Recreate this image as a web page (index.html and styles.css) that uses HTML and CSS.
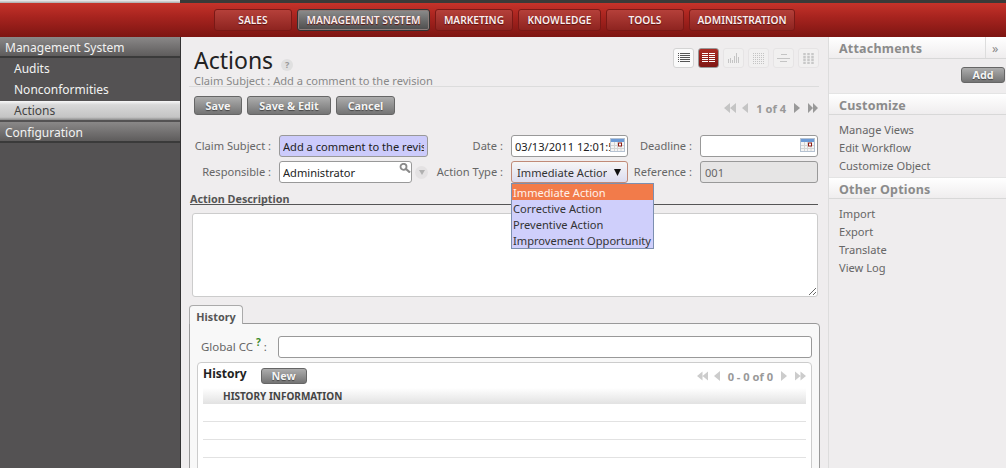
FILE: index.html
```html
<!DOCTYPE html>
<html lang="en">
<head>
    <meta charset="UTF-8">
    <title>Actions</title>
    <link rel="stylesheet" href="styles.css">
</head>
<body>
    <div class="topstrip"><div class="topstrip-left"></div></div>
    <nav class="menubar">
        <a class="menu-btn w-sales">SALES</a>
        <a class="menu-btn active">MANAGEMENT SYSTEM</a>
        <a class="menu-btn w-sales">MARKETING</a>
        <a class="menu-btn w-know">KNOWLEDGE</a>
        <a class="menu-btn w-sales">TOOLS</a>
        <a class="menu-btn w-admin">ADMINISTRATION</a>
    </nav>
    <div class="layout">
        <aside class="sidebar">
            <div class="side-head">Management System</div>
            <a class="side-item">Audits</a>
            <a class="side-item">Nonconformities</a>
            <a class="side-item selected">Actions</a>
            <div class="side-head second">Configuration</div>
        </aside>

        <main class="content">
            <div class="title-row">
                <div>
                    <h1>Actions <span class="help">?</span></h1>
                    <div class="subtitle">Claim Subject : Add a comment to the revision</div>
                </div>
                <div class="views">
                    <span class="view-btn on"><svg width="12" height="10" viewBox="0 0 12 10"><path d="M0 .5h1M0 2.500h1M0 4.500h1M0 6.500h1M0 8.500h1" stroke="#555"/><path d="M2 .5h10M2 2.500h10M2 4.500h10M2 6.500h10M2 8.500h10" stroke="#555" fill="none"/></svg></span>
                    <span class="view-btn current"><svg width="13" height="10" viewBox="0 0 13 10"><path d="M0 .5h6M7 .5h6M0 2.500h6M7 2.500h6M0 4.500h6M7 4.500h6M0 6.500h6M7 6.500h6M0 8.500h6M7 8.500h6" stroke="#fff" fill="none"/></svg></span>
                    <span class="view-btn"><svg width="12" height="10" viewBox="0 0 12 10"><path d="M.5 10V6M2.500 10V5M4.500 10V7M6.500 10V3M8.500 10V0M10.500 10V4" stroke="#c4c4c4" fill="none"/></svg></span>
                    <span class="view-btn"><svg width="12" height="11" viewBox="0 0 12 11"><path d="M0 .5h12M0 2.500h12M0 4.500h12M0 6.500h12M0 8.500h12M0 10.500h12" stroke="#c4c4c4" stroke-dasharray="1 1" fill="none"/></svg></span>
                    <span class="view-btn"><svg width="13" height="10" viewBox="0 0 13 10"><path d="M4 1.500h6M0 5.500h13M3 8.500h7" stroke="#c4c4c4" fill="none"/></svg></span>
                    <span class="view-btn"><svg width="11" height="11" viewBox="0 0 11 11"><path d="M1.500 0v11M5.500 0v11M9.500 0v11" stroke="#c8c8c8" stroke-width="2.500" stroke-dasharray="2.300 .6" fill="none"/></svg></span>
                </div>
            </div>

            <div class="action-row">
                <div class="actions">
                    <button class="btn b-save">Save</button>
                    <button class="btn b-edit">Save &amp; Edit</button>
                    <button class="btn b-cancel">Cancel</button>
                </div>
                <div class="pager main-pager">
                    <svg width="12" height="10" viewBox="0 0 12 10"><path d="M6 0v10L0 5zM12 0v10L6 5z" fill="#c4c4c4"/></svg>
                    <svg class="near" width="6" height="10" viewBox="0 0 6 10"><path d="M6 0v10L0 5z" fill="#c4c4c4"/></svg>
                    <span class="pager-text">1 of 4</span>
                    <svg width="6" height="10" viewBox="0 0 6 10"><path d="M0 0v10l6-5z" fill="#999"/></svg>
                    <svg width="10" height="10" viewBox="0 0 12 10" preserveAspectRatio="none"><path d="M0 0v10l6-5zM6 0v10l6-5z" fill="#999"/></svg>
                </div>
            </div>

            <form class="form-grid">
                <label>Claim Subject :</label>
                <input class="field required" type="text" value="Add a comment to the revision">
                <label>Date :</label>
                <div class="with-icon">
                    <input class="field" type="text" value="03/13/2011 12:01:58">
                    <svg class="cal" width="15" height="14" viewBox="0 0 15 14"><rect x=".5" y=".5" width="14" height="13" fill="#f4f4f4" stroke="#b5c2d2"/><rect x="1" y="1" width="13" height="3" fill="#6c9ad6"/><path d="M4.500 4v9M7.500 4v9M11 4v9M1 7.500h13M1 10.500h13" stroke="#d4d4d4"/><rect x="8.500" y="5" width="3" height="3" fill="#fff" stroke="#8c1a16"/></svg>
                </div>
                <label>Deadline :</label>
                <div class="with-icon">
                    <input class="field" type="text">
                    <svg class="cal" width="15" height="14" viewBox="0 0 15 14"><rect x=".5" y=".5" width="14" height="13" fill="#f4f4f4" stroke="#b5c2d2"/><rect x="1" y="1" width="13" height="3" fill="#6c9ad6"/><path d="M4.500 4v9M7.500 4v9M11 4v9M1 7.500h13M1 10.500h13" stroke="#d4d4d4"/><rect x="8.500" y="5" width="3" height="3" fill="#fff" stroke="#8c1a16"/></svg>
                </div>

                <label>Responsible :</label>
                <div class="m2o">
                    <div class="with-icon grow">
                        <input class="field" type="text" value="Administrator">
                        <svg class="search" width="12" height="10" viewBox="0 0 12 10"><circle cx="4.500" cy="3.800" r="3" fill="none" stroke="#8a8a8a" stroke-width="1.800"/><path d="M7 6l4 3.500" stroke="#8a8a8a" stroke-width="2.200"/></svg>
                    </div>
                    <span class="m2o-open"><svg width="6" height="5" viewBox="0 0 6 5"><path d="M0 0h6L3 5z" fill="#b0b0b0"/></svg></span>
                </div>
                <label>Action Type :</label>
                <div class="select-wrap">
                    <div class="select"><span class="select-text">Immediate Action</span><svg width="7" height="7" viewBox="0 0 7 7"><path d="M0 0h7L3.500 7z" fill="#111"/></svg></div>
                    <ul class="options">
                        <li class="hot">Immediate Action</li>
                        <li>Corrective Action</li>
                        <li>Preventive Action</li>
                        <li>Improvement Opportunity</li>
                    </ul>
                </div>
                <label>Reference :</label>
                <input class="field readonly" type="text" value="001">
            </form>

            <div class="separator">Action Description</div>
            <textarea class="description"></textarea>

            <div class="tabs"><span class="tab">History</span></div>
            <section class="tab-panel">
                <div class="cc-row">
                    <label>Global CC <sup>?</sup> :</label>
                    <input class="field" type="text">
                </div>
                <div class="history">
                    <div class="history-top">
                        <div class="history-left">
                            <b>History</b>
                            <button class="btn small">New</button>
                        </div>
                        <div class="pager">
                            <svg width="11" height="10" viewBox="0 0 12 10"><path d="M6 0v10L0 5zM12 0v10L6 5z" fill="#ccc"/></svg>
                            <svg class="near" width="6" height="10" viewBox="0 0 6 10"><path d="M6 0v10L0 5z" fill="#ccc"/></svg>
                            <span class="pager-text">0 - 0 of 0</span>
                            <svg width="6" height="10" viewBox="0 0 6 10"><path d="M0 0v10l6-5z" fill="#ccc"/></svg>
                            <svg width="11" height="10" viewBox="0 0 12 10"><path d="M0 0v10l6-5zM6 0v10l6-5z" fill="#ccc"/></svg>
                        </div>
                    </div>
                    <div class="grid-head">HISTORY INFORMATION</div>
                    <div class="grid-row"></div>
                    <div class="grid-row"></div>
                    <div class="grid-row"></div>
                </div>
            </section>
        </main>

        <aside class="rightbar">
            <div class="right-head first"><span>Attachments</span><span class="collapse">»</span></div>
            <div class="add-row"><button class="btn small add">Add</button></div>
            <div class="right-head">Customize</div>
            <ul class="right-links">
                <li>Manage Views</li>
                <li>Edit Workflow</li>
                <li>Customize Object</li>
            </ul>
            <div class="right-head">Other Options</div>
            <ul class="right-links">
                <li>Import</li>
                <li>Export</li>
                <li>Translate</li>
                <li>View Log</li>
            </ul>
        </aside>
    </div>
</body>
</html>
```

FILE: styles.css
```css
html, body {
    margin: 0;
    padding: 0;
    height: 468px;
    overflow: hidden;
}
body {
    font-family: "Noto Sans", "Open Sans", sans-serif;
    font-size: 11.1px;
    color: #555;
    background: #efedee;
}
.topstrip {
    height: 3px;
    background: #3a3a38;
}
.topstrip-left {
    width: 180px;
    height: 3px;
    background: linear-gradient(#f2f2f2, #aaa);
}
.menubar {
    height: 34px;
    box-sizing: border-box;
    padding: 6px 0 0 214px;
    display: flex;
    gap: 5px;
    background: linear-gradient(#c5332a, #a8241f 40%, #7d1512);
}
.menu-btn {
    height: 22px;
    box-sizing: border-box;
    text-align: center;
    line-height: 20px;
    font-size: 10.2px;
    font-weight: 600;
    color: #fbeeee;
    border: 1px solid #7a1916;
    border-radius: 3px;
    background: linear-gradient(#b5403a, #8e2420);
    text-shadow: 0 1px 1px #5a0f0c;
}
.w-sales {
    width: 78px;
}
.w-know {
    width: 83px;
}
.w-admin {
    width: 106px;
}
.menu-btn.active {
    width: 133px;
    border-color: #333;
    background: linear-gradient(#8c8c8c, #4c4c4c);
    box-shadow: 0 0 0 1px #8d7c7a inset;
}
.layout {
    display: flex;
    height: 431px;
}

/* left menu */
.sidebar {
    width: 180px;
    flex: none;
    background: #545253;
    border-right: 1px solid #333;
    color: #f2f2f2;
    font-size: 12px;
}
.side-head {
    height: 21px;
    box-sizing: border-box;
    line-height: 21px;
    padding-left: 5px;
    background: linear-gradient(#8a8888, #5e5c5c);
    border-bottom: 2px solid #3a3a3a;
}
.side-head.second {
    margin-top: 2px;
    line-height: 22px;
}
.side-item {
    display: block;
    height: 21px;
    line-height: 21px;
    padding-left: 14px;
}
.side-item.selected {
    height: 19px;
    margin-top: 1px;
    line-height: 19px;
    color: #444;
    background: linear-gradient(#f8f8f8, #d8d8d8 20%, #c4c4c4 85%, #8a8a8a);
}

/* middle */
.content {
    width: 647px;
    flex: none;
    box-sizing: border-box;
    padding: 0 8px;
}
.title-row {
    margin-right: 1px;
    height: 50px;
    box-sizing: border-box;
    padding-left: 5px;
    border-bottom: 1px solid #dcdcdc;
    display: flex;
    justify-content: space-between;
    align-items: flex-start;
}
h1 {
    margin: 8px 0 0;
    font-size: 23px;
    line-height: 30px;
    font-weight: 400;
    color: #222;
}
.help {
    display: inline-block;
    width: 12px;
    height: 12px;
    border-radius: 50%;
    background: #e0e0e0;
    color: #999;
    font-size: 9px;
    line-height: 12px;
    text-align: center;
    font-weight: 700;
    vertical-align: 1px;
    margin-left: 2px;
}
.subtitle {
    line-height: 12px;
    color: #888;
}
.views {
    display: flex;
    gap: 4px;
    margin-top: 11px;
}
.view-btn {
    width: 21px;
    height: 20px;
    box-sizing: border-box;
    display: flex;
    align-items: center;
    justify-content: center;
    border: 1px solid #e6e4e5;
    border-radius: 3px;
    background: #f1f0f0;
}
.view-btn.on {
    border-color: #d4d4d4;
    background: #fafafa;
}
.view-btn.current {
    border-color: #999;
    background: linear-gradient(#a92c26, #7f1714);
}
.action-row {
    display: flex;
    justify-content: space-between;
    align-items: flex-start;
    height: 20px;
    margin: 9px 2px 0 5px;
}
.actions {
    display: flex;
    gap: 5px;
}
.btn {
    height: 19px;
    padding: 0;
    font-family: inherit;
    font-size: 10.8px;
    font-weight: 700;
    color: #f4f4f4;
    border: 1px solid #666;
    border-radius: 3px;
    background: linear-gradient(#adadad, #747474);
    text-shadow: 0 1px 1px #444;
}
.b-save {
    width: 48px;
}
.b-edit {
    width: 84px;
}
.b-cancel {
    width: 59px;
}
.btn.small {
    height: 16px;
    width: 46px;
    line-height: 14px;
}
.btn.add {
    width: 44px;
}
.pager {
    display: flex;
    align-items: center;
    gap: 8px;
    font-weight: 700;
    color: #999;
}
.main-pager {
    margin-top: 3px;
}
.pager-text {
    padding-top: 2px;
}
.pager .near {
    margin-left: -2px;
}

/* form */
.form-grid {
    margin-top: 19px;
    margin-left: 3px;
    display: grid;
    grid-template-columns: 87px 149px 83px 117px 72px 118px;
    grid-template-rows: 22px 22px;
    row-gap: 4px;
    align-items: center;
}
.form-grid label {
    box-sizing: border-box;
    padding-right: 8px;
    text-align: right;
    color: #666;
    white-space: nowrap;
    line-height: 22px;
}
.field {
    width: 100%;
    height: 22px;
    box-sizing: border-box;
    padding: 0 3px;
    font-family: inherit;
    font-size: 11.1px;
    color: #222;
    border: 1px solid #999;
    border-radius: 3px;
    background: #fff;
    outline: none;
}
.field.required {
    background: #cccbfb;
}
.field.readonly {
    background: #e6e5e5;
    color: #666;
    padding-left: 4px;
}
.with-icon {
    position: relative;
    min-width: 0;
}
.with-icon .field {
    padding-right: 12px;
    display: block;
}
.cal {
    position: absolute;
    right: 3px;
    top: 3px;
}
.search {
    position: absolute;
    right: 1px;
    top: 2px;
}
.m2o {
    display: flex;
    align-items: center;
    gap: 3px;
}
.grow {
    flex: 1;
}
.m2o-open {
    width: 13px;
    height: 13px;
    border-radius: 50%;
    background: #e4e2e3;
    display: flex;
    align-items: center;
    justify-content: center;
}
.select-wrap {
    position: relative;
}
.select {
    height: 22px;
    box-sizing: border-box;
    padding: 0 6px 0 5px;
    display: flex;
    align-items: center;
    justify-content: space-between;
    border: 1px solid #c08a78;
    border-radius: 3px;
    background: linear-gradient(#f6f6f6, #dcdcf0);
    color: #333;
}
.select-text {
    width: 90px;
    overflow: hidden;
    white-space: nowrap;
}
.options {
    position: absolute;
    z-index: 2;
    top: 22px;
    left: 0;
    width: 143px;
    box-sizing: border-box;
    margin: 0;
    padding: 0;
    list-style: none;
    background: #cfcffb;
    border: 1px solid #7c8fb0;
    color: #333;
    white-space: nowrap;
}
.options li {
    height: 16px;
    line-height: 18px;
    padding-left: 1px;
}
.options li.hot {
    background: #f27b4a;
    color: #fff2ea;
}

.separator {
    margin: 8px 2px 0 1px;
    height: 13px;
    line-height: 15px;
    border-bottom: 1px solid #555;
    font-size: 10.8px;
    font-weight: 700;
    color: #555;
}
.description {
    display: block;
    width: 626px;
    height: 84px;
    box-sizing: border-box;
    margin: 8px 0 0 3px;
    border: 1px solid #ccc;
    border-radius: 3px;
    background: #fff;
    outline: none;
}

/* tab + grid */
.tabs {
    margin-top: 8px;
    height: 19px;
}
.tab {
    display: block;
    width: 54px;
    height: 19px;
    box-sizing: border-box;
    border: 1px solid #aaa;
    border-bottom: none;
    border-radius: 4px 4px 0 0;
    background: #f8f8f8;
    position: relative;
    z-index: 1;
    text-align: center;
    line-height: 21px;
    font-size: 10.8px;
    font-weight: 700;
    color: #555;
}
.tab-panel {
    width: 631px;
    height: 146px;
    box-sizing: border-box;
    margin-top: -1px;
    padding: 12px 7px 0;
    border: 1px solid #999;
    border-radius: 0 4px 0 0;
    background: #f8f8f8;
    overflow: hidden;
}
.cc-row {
    display: flex;
    align-items: center;
    gap: 6px;
    padding-left: 4px;
    color: #666;
}
.cc-row label {
    white-space: nowrap;
    width: 71px;
    font-size: 11.5px;
    line-height: 22px;
}
.cc-row sup {
    color: #3a8a2a;
    font-weight: 700;
    font-size: 10px;
    line-height: 0;
}
.cc-row .field {
    flex: 1;
}
.history {
    height: 120px;
    margin-top: 4px;
    padding: 0 5px;
    border: 1px solid #ccc;
    border-radius: 4px 4px 0 0;
    background: #fff;
}
.history-top {
    display: flex;
    justify-content: space-between;
    align-items: center;
    height: 25px;
}
.history-left {
    display: flex;
    align-items: center;
    gap: 14px;
}
.history-left b {
    color: #222;
    font-size: 12px;
    margin-top: -4px;
}
.grid-head {
    height: 16px;
    line-height: 16px;
    padding-left: 20px;
    font-size: 10px;
    font-weight: 700;
    color: #444;
    background: linear-gradient(#fff, #e2e2e2);
}
.grid-row {
    height: 17px;
    border-bottom: 1px solid #e2e2e2;
}

/* right */
.rightbar {
    flex: 1;
    border-left: 1px solid #ddd;
    color: #666;
}
.right-head {
    height: 22px;
    box-sizing: border-box;
    line-height: 23px;
    padding-left: 10px;
    font-size: 12.5px;
    font-weight: 700;
    letter-spacing: .2px;
    color: #8b8b8b;
    background: linear-gradient(#fff, #efedee);
    border-bottom: 1px solid #d8d8d8;
    border-top: 1px solid #e4e4e4;
}
.right-head.first {
    display: flex;
    justify-content: space-between;
    border-top: none;
}
.collapse {
    width: 14px;
    padding-left: 6px;
    border-left: 1px solid #ddd;
    font-weight: 400;
    color: #888;
}
.add-row {
    height: 34px;
    box-sizing: border-box;
    display: flex;
    justify-content: flex-end;
    padding: 8px 1px 0 0;
}
.right-links {
    margin: 0;
    padding: 6px 0 2px 10px;
    list-style: none;
}
.right-links li {
    height: 18px;
    line-height: 18px;
}
```
